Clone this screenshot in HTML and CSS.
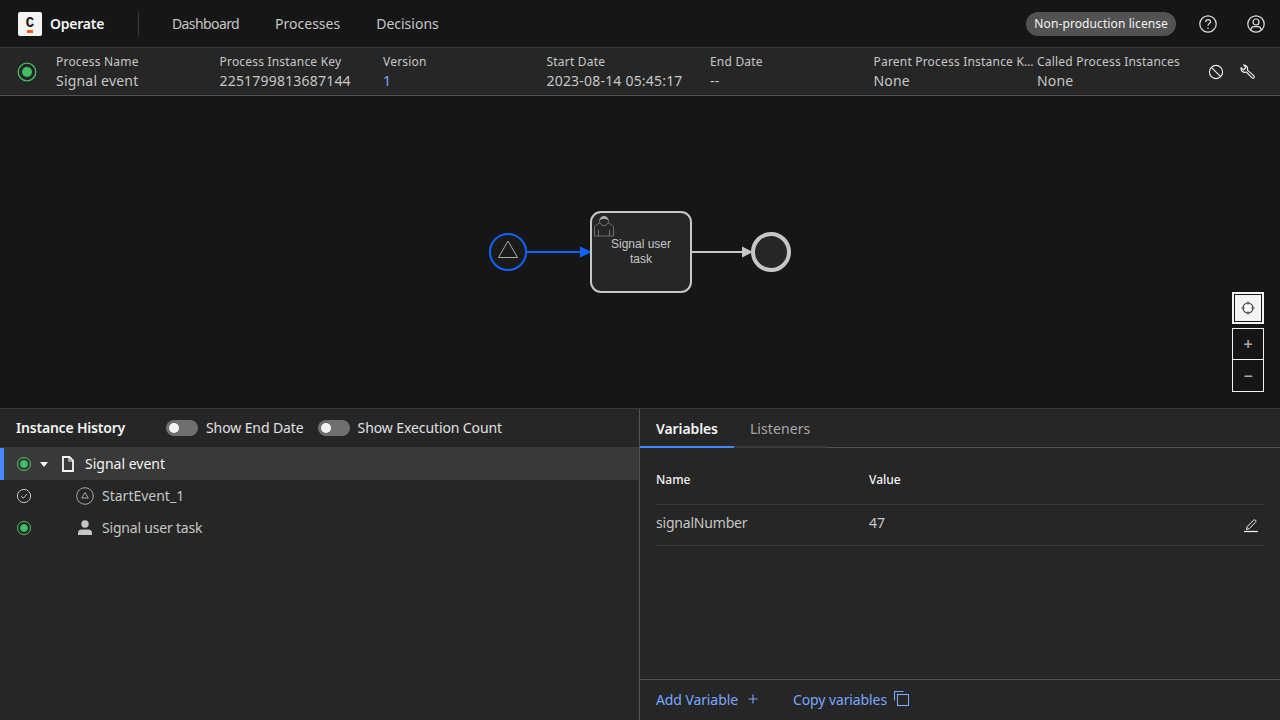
FILE: index.html
```html
<!DOCTYPE html>
<html lang="en">
<head>
  <meta charset="UTF-8" />
  <title>Operate</title>
  <link rel="stylesheet" href="styles.css">
</head>
<body>

  <header class="topbar">
    <div class="logo"><span class="logo-c">C</span><span class="logo-dash"></span></div>
    <span class="brand">Operate</span>
    <span class="topbar-sep"></span>
    <nav class="nav">
      <a>Dashboard</a>
      <a>Processes</a>
      <a>Decisions</a>
    </nav>
    <span class="license">Non-production license</span>
    <svg class="top-icon help" viewBox="0 0 20 20" width="20" height="20" fill="none" stroke="#e0e0e0" stroke-width="1.2">
      <circle cx="10" cy="10" r="8.2"/>
      <path d="M7.6 8c0-1.5 1.1-2.4 2.5-2.4s2.4.9 2.4 2.1c0 1.9-2.5 1.9-2.5 4"/>
      <circle cx="10" cy="14.3" r=".8" fill="#e0e0e0" stroke="none"/>
    </svg>
    <svg class="top-icon" viewBox="0 0 20 20" width="20" height="20" fill="none" stroke="#e0e0e0" stroke-width="1.2">
      <circle cx="10" cy="10" r="8.2"/>
      <circle cx="10" cy="8" r="3"/>
      <path d="M4.8 16c.3-2.4 1.8-3.4 3.4-3.4h3.6c1.6 0 3.1 1 3.4 3.4"/>
    </svg>
  </header>

  <section class="instance">
    <svg class="state-icon" viewBox="0 0 20 20" width="20" height="20">
      <circle cx="10" cy="10" r="8.8" fill="none" stroke="#42be65" stroke-width="1.3"/>
      <circle cx="10" cy="10" r="5" fill="#42be65"/>
    </svg>
    <div class="instance-cols">
      <div class="col"><span class="col-label">Process Name</span><span class="col-value">Signal event</span></div>
      <div class="col"><span class="col-label">Process Instance Key</span><span class="col-value">2251799813687144</span></div>
      <div class="col"><span class="col-label">Version</span><span class="col-value link">1</span></div>
      <div class="col"><span class="col-label">Start Date</span><span class="col-value">2023-08-14 05:45:17</span></div>
      <div class="col"><span class="col-label">End Date</span><span class="col-value">--</span></div>
      <div class="col"><span class="col-label">Parent Process Instance Key</span><span class="col-value">None</span></div>
      <div class="col"><span class="col-label">Called Process Instances</span><span class="col-value">None</span></div>
    </div>
    <div class="instance-actions">
      <svg viewBox="0 0 16 16" width="16" height="16" fill="none" stroke="#f4f4f4" stroke-width="1.1">
        <circle cx="8" cy="8" r="6.6"/>
        <path d="M3.4 3.4l9.2 9.2"/>
      </svg>
      <svg viewBox="0 0 16 16" width="16" height="16" fill="none" stroke="#f4f4f4" stroke-width="1.1">
        <path d="M3.900 1.100a3.700 3.700 0 0 1 3.500 5l6.300 5.600c.8.8.8 1.500.2 2.100s-1.400.5-2-.1L6.300 8a3.700 3.700 0 0 1-5.200-4.200l2.600 2.100 2.100-2.200z"/>
      </svg>
    </div>
  </section>

  <section class="diagram">
    <svg class="bpmn" viewBox="0 0 320 120" width="320" height="120">
      <!-- origin of this drawing is 480,192 on the page -->
      <circle cx="28" cy="60" r="18" fill="#1a1a1a" stroke="#0f62fe" stroke-width="2"/>
      <path d="M28 49l9.500 16.500h-19z" fill="none" stroke="#a8a8a8" stroke-width="1"/>
      <path d="M47 60h55" stroke="#0f62fe" stroke-width="2"/>
      <path d="M100 54.500l12 5.500-12 5.500z" fill="#0f62fe"/>
      <rect x="111" y="20" width="100" height="80" rx="10" fill="#262626" stroke="#c6c6c6" stroke-width="2"/>
      <g fill="none" stroke="#6f6f6f" stroke-width="1">
        <path d="M114.500 44v-8c0-3 3-4 6-5l3.500 3 3.500-3c3 1 6 2 6 5v8z"/>
        <path d="M118.500 44v-6M129.500 44v-6"/>
        <circle cx="124" cy="29" r="4.500" fill="#262626"/>
        <path d="M119.500 28.500c.5-6 8.500-6 9 0-2-2-7-2-9 0z" fill="#a8a8a8" stroke="none"/>
      </g>
      <text class="task-label" x="161" y="56">Signal user</text>
      <text class="task-label" x="161" y="71">task</text>
      <path d="M212 60h52" stroke="#c6c6c6" stroke-width="2"/>
      <path d="M262 54.500l11 5.500-11 5.500z" fill="#c6c6c6"/>
      <circle cx="291" cy="60" r="18" fill="#262626" stroke="#c6c6c6" stroke-width="4"/>
    </svg>

    <div class="zoom-controls">
      <button class="zoom-btn zoom-reset">
        <svg viewBox="0 0 14 14" width="14" height="14" fill="none" stroke="#393939" stroke-width="1.100">
          <circle cx="7" cy="7" r="5"/>
          <path d="M7 0.500v3M7 10.500v3M0.500 7h3M10.500 7h3"/>
        </svg>
      </button>
      <div class="zoom-pair">
        <button class="zoom-btn">+</button>
        <button class="zoom-btn">&minus;</button>
      </div>
    </div>
  </section>

  <section class="bottom">
    <div class="history">
      <div class="history-head">
        <span class="history-title">Instance History</span>
        <label class="toggle"><span class="switch"></span><span class="toggle-text">Show End Date</span></label>
        <label class="toggle"><span class="switch"></span><span class="toggle-text">Show Execution Count</span></label>
      </div>
      <div class="tree-row selected">
        <svg class="row-state" viewBox="0 0 16 16" width="16" height="16">
          <circle cx="8" cy="8" r="6.600" fill="none" stroke="#42be65" stroke-width="1"/>
          <circle cx="8" cy="8" r="3.800" fill="#42be65"/>
        </svg>
        <svg class="caret" viewBox="0 0 8 5" width="8" height="5"><path d="M0 0h8L4 5z" fill="#f4f4f4"/></svg>
        <svg class="doc" viewBox="0 0 12 16" width="12" height="16" fill="none" stroke="#f4f4f4" stroke-width="1.800">
          <path d="M1 1h6.500L11 4.500V15H1z"/>
          <path d="M7 1v4h4" stroke-width="1.200"/>
        </svg>
        <span class="tree-text strong">Signal event</span>
      </div>
      <div class="tree-row">
        <svg class="row-state" viewBox="0 0 16 16" width="16" height="16" fill="none" stroke="#c6c6c6" stroke-width="1">
          <circle cx="8" cy="8" r="6.600"/>
          <path d="M5.200 8.200l2 2 3.600-4"/>
        </svg>
        <svg class="flow-icon" viewBox="0 0 18 18" width="18" height="18" fill="none" stroke="#a8a8a8" stroke-width="1">
          <circle cx="9" cy="9" r="8.300"/>
          <path d="M9 5.500l3.300 5.500H5.700z"/>
        </svg>
        <span class="tree-text">StartEvent_1</span>
      </div>
      <div class="tree-row">
        <svg class="row-state" viewBox="0 0 16 16" width="16" height="16">
          <circle cx="8" cy="8" r="6.600" fill="none" stroke="#42be65" stroke-width="1"/>
          <circle cx="8" cy="8" r="3.800" fill="#42be65"/>
        </svg>
        <svg class="flow-icon" viewBox="0 0 18 18" width="18" height="18" fill="#c6c6c6">
          <circle cx="9" cy="5" r="3.700"/>
          <path d="M2 16v-2.200c0-2 1.500-3.300 3.500-3.300h7c2 0 3.500 1.300 3.500 3.300V16z"/>
        </svg>
        <span class="tree-text tight">Signal user task</span>
      </div>
    </div>

    <div class="variables">
      <div class="tabs">
        <a class="tab active">Variables</a>
        <a class="tab">Listeners</a>
      </div>
      <div class="var-table">
        <div class="var-row var-head"><span class="var-name">Name</span><span>Value</span></div>
        <div class="var-row var-body">
          <span class="var-name">signalNumber</span><span>47</span>
          <svg class="edit" viewBox="0 0 16 16" width="16" height="16" fill="none" stroke="#f4f4f4" stroke-width="1">
            <path d="M1 14.500h14" stroke-width="1.200"/>
            <path d="M3.500 12.500l.6-2.800 6.400-6.400c.6-.6 1.400-.6 2 0 .6.600.6 1.400 0 2l-6.400 6.400z"/>
          </svg>
        </div>
      </div>
      <div class="var-footer">
        <a class="foot-link">Add Variable
          <svg viewBox="0 0 16 16" width="16" height="16" fill="none" stroke="#78a9ff" stroke-width="1.100"><path d="M8 3.500v9M3.500 8h9"/></svg>
        </a>
        <a class="foot-link">Copy variables
          <svg viewBox="0 0 16 16" width="16" height="16" fill="none" stroke="#78a9ff" stroke-width="1.100"><path d="M.5 9.500v-9h9"/><rect x="3.500" y="3.500" width="11" height="11"/></svg>
        </a>
      </div>
    </div>
  </section>

</body>
</html>
```

FILE: styles.css
```css
* {
  box-sizing: border-box;
}
html, body {
  margin: 0;
  height: 720px;
  overflow: hidden;
}
body {
  display: flex;
  flex-direction: column;
  font-family: "Noto Sans", "Liberation Sans", sans-serif;
  background: #161616;
  color: #c6c6c6;
  font-size: 14px;
}
svg {
  display: block;
  flex: none;
}

/* top bar */
.topbar {
  height: 47px;
  flex: none;
  display: flex;
  align-items: center;
  padding: 1px 14px 0 18px;
  background: #161616;
}
.logo {
  width: 24px;
  height: 24px;
  border-radius: 2px;
  background: #f4f4f4;
  display: flex;
  flex-direction: column;
  align-items: center;
  color: #161616;
}
.logo-c {
  font-family: "Liberation Mono", monospace;
  font-weight: 700;
  font-size: 14px;
  line-height: 14px;
  margin-top: 4px;
}
.logo-dash {
  width: 6px;
  height: 3px;
  background: #fc5d0d;
}
.brand {
  margin: -2px 0 0 8px;
  width: 88px;
  color: #f4f4f4;
  font-weight: 600;
  font-size: 14px;
  letter-spacing: -.25px;
}
.topbar-sep {
  width: 1px;
  height: 24px;
  background: #393939;
}
.nav {
  display: flex;
  gap: 36px;
  margin: -2px 0 0 33px;
  flex: 1;
}
.nav a {
  color: #c6c6c6;
  font-size: 14px;
}
.nav a:first-child {
  letter-spacing: -.6px;
}
.license {
  height: 24px;
  line-height: 24px;
  padding: 0 8px;
  border-radius: 12px;
  background: #525252;
  color: #f4f4f4;
  font-size: 12px;
  letter-spacing: .1px;
}
.help {
  margin-left: 22px;
  margin-right: 28px;
}

/* instance header */
.instance {
  height: 49px;
  flex: none;
  display: flex;
  align-items: center;
  padding: 1px 24px 0 17px;
  background: #262626;
  border-top: 1px solid #393939;
  border-bottom: 1px solid #525252;
}
.instance-cols {
  display: grid;
  grid-template-columns: repeat(7, 163.5px);
  margin-left: 19px;
  flex: none;
  width: 1145px;
}
.col {
  display: flex;
  flex-direction: column;
  min-width: 0;
}
.col-label {
  font-size: 12px;
  line-height: 16px;
  letter-spacing: .2px;
  white-space: nowrap;
  overflow: hidden;
  text-overflow: ellipsis;
}
.col-value {
  font-size: 14px;
  line-height: 20px;
  margin-top: 1px;
  letter-spacing: .2px;
}
.link {
  color: #78a9ff;
}
.instance-actions {
  display: flex;
  gap: 16px;
  margin-left: auto;
}

/* diagram */
.diagram {
  position: relative;
  flex: 1;
  display: flex;
  align-items: center;
  justify-content: center;
  background: #161616;
}
.task-label {
  font-family: "Liberation Sans", Arial, sans-serif;
  font-size: 12px;
  fill: #c6c6c6;
  text-anchor: middle;
}
.zoom-controls {
  position: absolute;
  top: 196px;
  right: 16px;
  width: 32px;
  display: flex;
  flex-direction: column;
  gap: 4px;
}
.zoom-btn {
  width: 32px;
  height: 32px;
  padding: 0;
  display: flex;
  align-items: center;
  justify-content: center;
  background: #161616;
  border: 1px solid #f4f4f4;
  color: #a8a8a8;
  font-family: "Noto Sans", sans-serif;
  font-size: 16px;
  font-weight: 600;
}
.zoom-reset {
  background: #f4f4f4;
  border: 2px solid #f4f4f4;
  box-shadow: inset 0 0 0 1px #161616;
}
.zoom-pair {
  display: flex;
  flex-direction: column;
}
.zoom-pair .zoom-btn + .zoom-btn {
  border-top: 0;
}

/* bottom panels */
.bottom {
  height: 312px;
  flex: none;
  display: flex;
  background: #262626;
  border-top: 1px solid #393939;
}
.history {
  width: 640px;
  flex: none;
  border-right: 1px solid #525252;
}
.history-head {
  height: 39px;
  display: flex;
  align-items: center;
  padding-left: 16px;
  border-bottom: 1px solid #393939;
}
.history-title {
  width: 150px;
  margin-top: -2px;
  color: #f4f4f4;
  font-size: 14px;
  font-weight: 600;
  letter-spacing: -.2px;
}
.toggle {
  display: flex;
  align-items: center;
  gap: 8px;
  margin-right: 14px;
  color: #e0e0e0;
  font-size: 14px;
}
.toggle-text {
  margin-top: -2px;
  letter-spacing: -.1px;
}
.switch {
  position: relative;
  width: 32px;
  height: 16px;
  border-radius: 8px;
  background: #6f6f6f;
}
.switch::before {
  content: "";
  position: absolute;
  left: 3px;
  top: 3px;
  width: 10px;
  height: 10px;
  border-radius: 50%;
  background: #f4f4f4;
}
.tree-row {
  height: 32px;
  display: flex;
  align-items: center;
  padding-left: 16px;
}
.tree-row.selected {
  background: #393939;
  box-shadow: inset 4px 0 0 #4589ff;
}
.caret {
  margin-left: 8px;
}
.doc {
  margin-left: 14px;
}
.flow-icon {
  margin-left: 44px;
}
.tree-text {
  margin: -2px 0 0 8px;
  font-size: 14px;
}
.tree-text.tight {
  letter-spacing: -.2px;
}
.tree-text.strong {
  margin-left: 11px;
  color: #f4f4f4;
}
.variables {
  flex: 1;
  display: flex;
  flex-direction: column;
}
.tabs {
  height: 39px;
  flex: none;
  display: flex;
  border-bottom: 1px solid #525252;
}
.tab {
  height: 39px;
  padding: 0 16px;
  line-height: 39px;
  font-size: 14px;
  color: #a8a8a8;
  border-bottom: 2px solid #393939;
  letter-spacing: .1px;
}
.tab.active {
  color: #f4f4f4;
  font-weight: 600;
  letter-spacing: -.1px;
  border-bottom-color: #4589ff;
}
.var-table {
  flex: 1;
  padding: 0 16px;
}
.var-row {
  display: flex;
  align-items: center;
  border-bottom: 1px solid #393939;
}
.var-name {
  width: 213px;
}
.var-head {
  height: 57px;
  padding-top: 6px;
  font-size: 12px;
  font-weight: 500;
  color: #f4f4f4;
}
.var-body {
  height: 41px;
  padding-bottom: 5px;
  font-size: 14px;
}
.var-body .var-name {
  letter-spacing: -.2px;
}
.edit {
  margin-left: auto;
  margin-right: 5px;
  margin-top: 4px;
}
.var-footer {
  height: 41px;
  flex: none;
  display: flex;
  align-items: center;
  gap: 32px;
  padding: 0 0 2px 16px;
  border-top: 1px solid #525252;
}
.foot-link {
  display: flex;
  align-items: center;
  gap: 7px;
  color: #78a9ff;
  font-size: 14px;
  letter-spacing: -.1px;
}
```
